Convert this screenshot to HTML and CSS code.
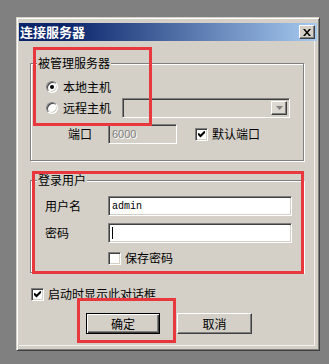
FILE: index.html
```html
<!DOCTYPE html>
<html lang="zh-CN">
<head>
    <meta charset="UTF-8">
    <meta name="viewport" content="width=device-width, initial-scale=1.0">
    <title>连接服务器</title>
    <link rel="stylesheet" href="styles.css">
</head>
<body>
    <div class="window">
        <div class="titlebar">
            <span class="title">连接服务器</span>
            <span class="close-btn">
                <svg width="8" height="7" viewBox="0 0 8 7"><path d="M0 0h2l2 2.5L6 0h2L5 3.5 8 7H6L4 4.5 2 7H0l3-3.5z" fill="#000"/></svg>
            </span>
        </div>

        <div class="client">
            <!-- Serwer -->
            <fieldset class="group group-server">
                <legend>被管理服务器</legend>
                <div class="row row-local">
                    <label class="radio-label"><span class="radio checked"></span>本地主机</label>
                </div>
                <div class="row row-remote">
                    <label class="radio-label"><span class="radio"></span>远程主机</label>
                    <div class="combo">
                        <span class="combo-btn">
                            <svg width="7" height="4" viewBox="0 0 7 4"><path d="M0 0h7L3.5 4z" fill="#808080"/></svg>
                        </span>
                    </div>
                </div>
                <div class="row row-port">
                    <span class="field-label">端口</span>
                    <span class="input input-port disabled">6000</span>
                    <label class="check-label check-port"><span class="check checked"><svg width="7" height="7" viewBox="0 0 7 7"><path d="M0 2.5l2.5 2.5L7 0.5" stroke="#000" stroke-width="2" fill="none"/></svg></span>默认端口</label>
                </div>
            </fieldset>

            <!-- Użytkownik -->
            <fieldset class="group group-user">
                <legend>登录用户</legend>
                <div class="row row-user">
                    <span class="field-label label-user">用户名</span>
                    <span class="input input-text">admin</span>
                </div>
                <div class="row row-pass">
                    <span class="field-label label-user">密码</span>
                    <span class="input input-text"><span class="caret"></span></span>
                </div>
                <div class="row row-save">
                    <label class="check-label"><span class="check"></span>保存密码</label>
                </div>
            </fieldset>

            <div class="row row-startup">
                <label class="check-label"><span class="check checked"><svg width="7" height="7" viewBox="0 0 7 7"><path d="M0 2.5l2.5 2.5L7 0.5" stroke="#000" stroke-width="2" fill="none"/></svg></span>启动时显示此对话框</label>
            </div>

            <div class="row row-buttons">
                <button class="btn btn-default">确定</button>
                <button class="btn btn-cancel">取消</button>
            </div>
        </div>
    </div>

    <div class="mark mark-server"></div>
    <div class="mark mark-user"></div>
    <div class="mark mark-ok"></div>
</body>
</html>
```

FILE: styles.css
```css
* {
    box-sizing: border-box;
}
body {
    margin: 0;
    height: 364px;
    overflow: hidden;
    position: relative;
    background-color: #808080;
    font-family: "Noto Sans CJK SC", sans-serif;
    font-size: 12px;
    color: #000;
}
.window {
    margin: 17px 0 0 16px;
    width: 304px;
    height: 334px;
    padding: 5px 2px 2px 2px;
    background-color: #d4d0c8;
    border: 1px solid;
    border-color: #d4d0c8 #404040 #404040 #d4d0c8;
    box-shadow: inset 1px 1px #fff, inset -1px -1px #808080;
}
.titlebar {
    height: 18px;
    display: flex;
    align-items: center;
    justify-content: space-between;
    padding: 0 2px 0 1px;
    background: linear-gradient(to right, #0a246a 0%, #0a246a 15%, #a6caf0 100%);
}
.title {
    color: #fff;
    font-weight: bold;
    font-size: 13px;
    line-height: 18px;
}
.close-btn {
    width: 16px;
    height: 14px;
    display: flex;
    align-items: center;
    justify-content: center;
    background-color: #d4d0c8;
    border: 1px solid;
    border-color: #fff #404040 #404040 #fff;
    box-shadow: inset -1px -1px #808080;
}
.client {
    height: 305px;
    width: 296px;
    display: flex;
    flex-direction: column;
    align-items: flex-start;
    padding-left: 11px;
    border-right: 1px solid #f2f1ee;
    border-bottom: 1px solid #f2f1ee;
}
.group {
    width: 274px;
    min-width: 0;
    margin: 0;
    padding: 0 0 16px 0;
    border: 1px solid #808080;
    box-shadow: inset 1px 1px #fff, 1px 1px #fff;
}
.group legend {
    margin-left: 6px;
    padding: 0 1px;
    line-height: 14px;
    background-color: #d4d0c8;
}
.group-server {
    margin-top: 15px;
}
.group-user {
    margin-top: 12px;
    padding-bottom: 5px;
}
.row {
    display: flex;
    align-items: center;
    height: 20px;
}
.row-local {
    margin-top: 7px;
    padding-left: 15px;
}
.row-remote {
    margin-top: 1px;
    padding-left: 15px;
}
.row-port {
    margin-top: 6px;
    padding-left: 37px;
}
.radio-label,
.check-label {
    display: flex;
    align-items: center;
    line-height: 14px;
}
.radio-label {
    width: 76px;
}
.radio {
    width: 12px;
    height: 12px;
    margin-right: 5px;
    border-radius: 50%;
    border: 1px solid;
    border-color: #808080 #fff #fff #808080;
    box-shadow: inset 1px 1px #404040, inset -1px -1px #d4d0c8;
    background-color: #fff;
    display: flex;
    align-items: center;
    justify-content: center;
}
.radio.checked::after {
    content: "";
    width: 4px;
    height: 4px;
    border-radius: 50%;
    background-color: #000;
}
.check {
    width: 13px;
    height: 13px;
    margin-right: 4px;
    border: 1px solid;
    border-color: #808080 #fff #fff #808080;
    box-shadow: inset 1px 1px #404040, inset -1px -1px #d4d0c8;
    background-color: #fff;
    display: flex;
    align-items: center;
    justify-content: center;
}
.combo {
    width: 168px;
    height: 20px;
    display: flex;
    justify-content: flex-end;
    padding: 2px;
    background-color: #d4d0c8;
    border: 1px solid;
    border-color: #808080 #fff #fff #808080;
    box-shadow: inset 1px 1px #404040, inset -1px -1px #d4d0c8;
}
.combo-btn {
    width: 16px;
    display: flex;
    align-items: center;
    justify-content: center;
    background-color: #dcd9d2;
    border: 1px solid;
    border-color: #fff #404040 #404040 #fff;
    box-shadow: inset -1px -1px #808080;
}
.field-label {
    width: 40px;
    line-height: 14px;
}
.label-user {
    width: 63px;
}
.input {
    height: 20px;
    display: flex;
    align-items: center;
    padding-left: 3px;
    background-color: #fff;
    border: 1px solid;
    border-color: #808080 #fff #fff #808080;
    box-shadow: inset 1px 1px #404040, inset -1px -1px #d4d0c8;
}
.input-port {
    width: 69px;
    font-family: "Liberation Sans", sans-serif;
    font-size: 11px;
}
.input.disabled {
    background-color: #d4d0c8;
    color: #808080;
    text-shadow: 1px 1px #fff;
}
.check-port {
    margin-left: 18px;
}
.input-text {
    width: 184px;
    font-family: "Liberation Mono", monospace;
    font-size: 10px;
}
.caret {
    width: 1px;
    height: 12px;
    background-color: #000;
}
.row-user {
    margin-top: 9px;
    padding-left: 14px;
}
.row-pass {
    margin-top: 7px;
    padding-left: 14px;
}
.row-save {
    margin-top: 6px;
    height: 18px;
    padding-left: 77px;
}
.row-startup {
    margin-top: 12px;
    height: 18px;
    padding-left: 1px;
}
.row-buttons {
    margin-top: 10px;
    height: 21px;
    padding-left: 56px;
}
.btn {
    height: 21px;
    padding: 0;
    font-family: "Noto Sans CJK SC", sans-serif;
    font-size: 12px;
    line-height: 14px;
    color: #000;
    background-color: #d4d0c8;
    border: 1px solid;
}
.btn-default {
    width: 74px;
    border-color: #000;
    box-shadow: inset 1px 1px #fff, inset -1px -1px #404040, inset -2px -2px #808080;
}
.btn-cancel {
    width: 75px;
    margin-left: 17px;
    border-color: #fff #404040 #404040 #fff;
    box-shadow: inset -1px -1px #808080;
}
/* czerwone ramki zaznaczenia */
.mark {
    position: absolute;
    border: 3px solid #e8383e;
}
.mark-server {
    left: 33px;
    top: 47px;
    width: 119px;
    height: 79px;
}
.mark-user {
    left: 32px;
    top: 171px;
    width: 272px;
    height: 103px;
}
.mark-ok {
    left: 77px;
    top: 298px;
    width: 99px;
    height: 45px;
}
```
